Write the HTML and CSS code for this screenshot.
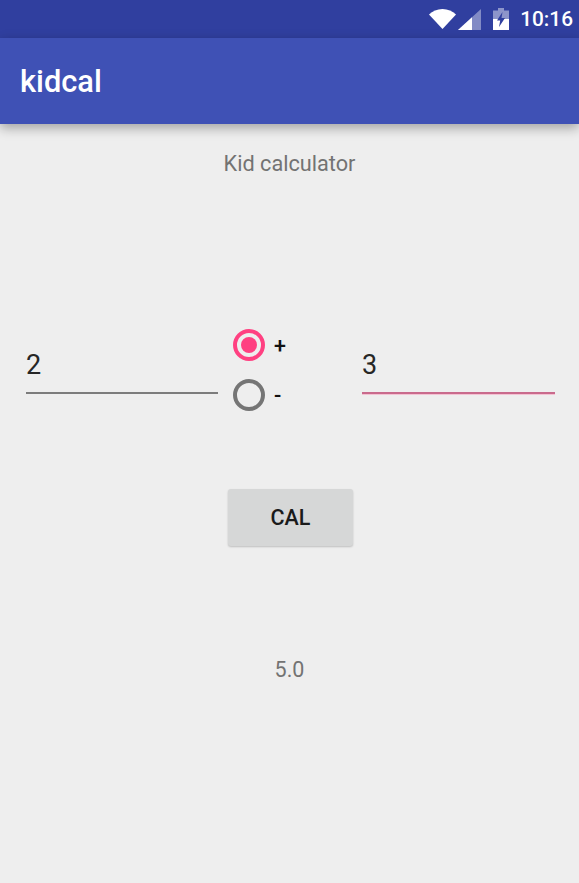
FILE: index.html
```html
<!DOCTYPE html>
<html lang="en">
<head>
<meta charset="utf-8">
<title>kidcal</title>
<link rel="stylesheet" href="styles.css">
</head>
<body>
<div class="screen">
  <header class="statusbar">
    <svg class="ic-wifi" width="27" height="20" viewBox="0 0 27 20"><path d="M0 5.5C3.5 2.2 8.2 0 13.5 0S23.500 2.200 27 5.500L13.500 20z" fill="#fff"/></svg>
    <svg class="ic-signal" width="23" height="21" viewBox="0 0 23 21"><path d="M23 0V21H0z" fill="#fff" fill-opacity=".4"/><path d="M14 8.300V21H0z" fill="#fff"/></svg>
    <svg class="ic-battery" width="16" height="22" viewBox="0 0 16 22"><path d="M5 0h6v2.500h5V22H0V2.500h5z" fill="#fff" fill-opacity=".45"/><path d="M0 11h16v11H0z" fill="#fff"/><path d="M9.500 4L4 12.500h3.200L6 19l6-9H8.500z" fill="#303f9f"/></svg>
    <span class="clock">10:16</span>
  </header>
  <div class="appbar"><h1 class="title">kidcal</h1></div>
  <main class="content">
    <p class="heading">Kid calculator</p>
    <section class="inputs">
      <div class="field"><span class="value">2</span></div>
      <div class="radios">
        <div class="radio-row">
          <span class="radio radio-on"><span class="dot"></span></span>
          <span class="radio-label">+</span>
        </div>
        <div class="radio-row">
          <span class="radio"></span>
          <span class="radio-label">-</span>
        </div>
      </div>
      <div class="field field-focus"><span class="value">3</span></div>
    </section>
    <div class="btn-wrap"><button class="btn" type="button">CAL</button></div>
    <p class="result">5.0</p>
  </main>
</div>
</body>
</html>
```
FILE: styles.css
```css
* { box-sizing: border-box; }
html, body { margin: 0; padding: 0; height: 100%; }
body { font-family: Roboto, "Liberation Sans", sans-serif; background: #eeeeee; overflow: hidden; }
.screen { width: 579px; height: 883px; display: flex; flex-direction: column; }
.statusbar {
  height: 38px; background: #303f9f; display: flex; align-items: center;
  justify-content: flex-end; padding-right: 6px; flex: none;
}
.ic-wifi { margin-right: 2px; }
.ic-signal { margin-right: 12px; }
.ic-battery { margin-right: 11px; }
.clock { color: #fff; font-size: 20.8px; font-weight: 500; }
.appbar {
  height: 86px; background: #3f51b5; display: flex; align-items: center; padding: 0 20px;
  box-shadow: 0 4px 11px rgba(0,0,0,.32); flex: none; position: relative;
}
.title { margin: 0; color: #fff; font-size: 30.8px; font-weight: 500; }
.content { flex: 1; display: flex; flex-direction: column; }
.heading { margin: 27px 0 0; text-align: center; color: #737373; font-size: 21.7px; line-height: 26px; }
.inputs { display: flex; margin-top: 137px; padding: 0 24px 0 26px; height: 134px; }
.field { width: 192px; height: 50px; margin-top: 30px; border-bottom: 2px solid #7c7c7c; padding-top: 5px; }
.field-focus { width: 193px; margin-left: auto; border-bottom: 2px solid #c96a8c; box-shadow: 0 1px 0 #f3c3d3; }
.value { font-size: 27px; line-height: 32px; color: #262626; }
.radios { margin-left: 15px; display: flex; flex-direction: column; gap: 18px; padding-top: 15px; }
.radio-row { display: flex; align-items: center; height: 32px; }
.radio { width: 32px; height: 32px; border-radius: 50%; border: 4px solid #757575; display: flex; align-items: center; justify-content: center; }
.radio-on { border-color: #ff4081; }
.dot { width: 16px; height: 16px; border-radius: 50%; background: #ff4081; }
.radio-label { margin-left: 9px; font-size: 21.5px; font-weight: 500; color: #111; }
.btn-wrap { display: flex; justify-content: center; margin-top: 41px; padding-left: 2px; }
.btn {
  width: 125px; height: 57px; border: 0; border-radius: 3px; background: #d6d7d7;
  font-family: inherit; font-size: 21.5px; font-weight: 500; color: #1a1a1a;
  box-shadow: 0 1px 2px rgba(0,0,0,.2); padding: 0;
}
.result { margin: 111px 0 0; text-align: center; color: #737373; font-size: 21.5px; line-height: 26px; }
```
